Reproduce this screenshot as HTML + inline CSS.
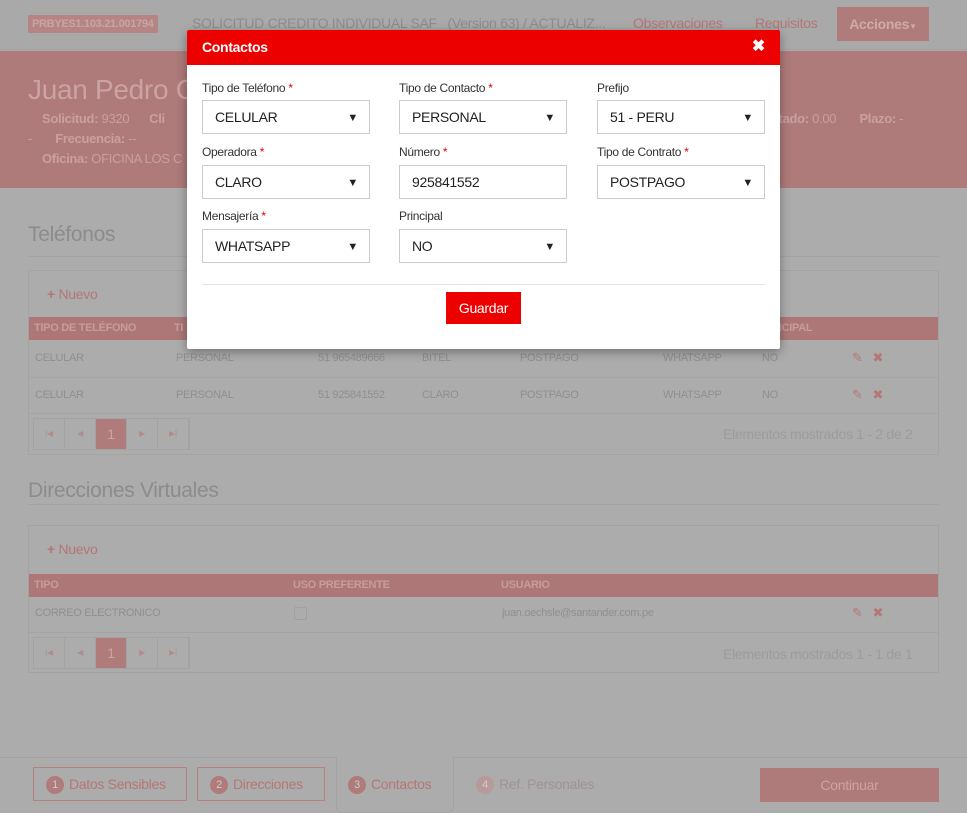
<!DOCTYPE html>
<html><head><meta charset="utf-8"><style>
*{box-sizing:border-box;margin:0;padding:0}
body{width:967px;height:812px;overflow:hidden;background:#acacac;font-family:"Liberation Sans",sans-serif;position:relative;color:#8a8a8a;letter-spacing:-0.3px}
.abs{position:absolute}
.top{left:0;top:0;width:967px;height:50px;background:#a9a9a9;border-bottom:1px solid #a0a0a0}
.badge{left:28px;top:15px;background:#b58585;color:#c9a4a4;font-size:11px;font-weight:bold;padding:3px 4px;border-radius:2px}
.hdr{left:0;top:51px;width:967px;height:137px;background:#ae7a7a}
.red{color:#b57676}
.sec{font-size:21px;color:#8c8c8c}
.box{left:28px;width:911px;border:1px solid #a3a3a3}
.th{background:#ad7777;color:#c79c9c;font-size:11px;font-weight:bold;height:23px;line-height:23px}
.cell{font-size:11px;color:#8f8f8f}
.pag{border:1px solid #a3a3a3;height:32px;display:flex}
.pag span{width:31px;border-right:1px solid #a3a3a3;text-align:center;line-height:30px;font-size:8px;color:#b28c8c}
.pag span.a{background:#b07b7b;color:#c8a5a5;font-size:14px}
.modal{left:187px;top:30px;width:593px;height:319px;background:#fff;box-shadow:0 3px 10px rgba(0,0,0,.35);border-radius:2px}
.mh{height:35px;background:#ec0000;color:#fff;font-weight:bold;font-size:14px;line-height:34px;padding-left:15px;border-radius:2px 2px 0 0}
.lbl{font-size:12px;color:#333}
.lbl b{color:#d00;font-weight:normal}
.sel{width:168px;height:34px;border:1px solid #ccc;font-size:14px;color:#222;line-height:32px;padding-left:12px}
.sel i{position:absolute;right:11px;top:1px;font-style:normal;font-size:11px}
.num{display:inline-block;width:18px;height:18px;border-radius:9px;background:#b07b7b;color:#ccc;font-size:11px;text-align:center;line-height:18px;margin-right:5px;vertical-align:middle}
.step{font-size:14px;line-height:18px}
</style></head><body>
<div class="abs top"></div>
<div class="abs badge">PRBYES1.103.21.001794</div>
<div class="abs" style="left:192px;top:15px;font-size:14px;color:#8d8d8d">SOLICITUD CREDITO INDIVIDUAL SAF &nbsp;&nbsp;(Version 63) / ACTUALIZ...</div>
<div class="abs red" style="left:633px;top:15px;font-size:14px">Observaciones</div>
<div class="abs red" style="left:755px;top:15px;font-size:14px">Requisitos</div>
<div class="abs" style="left:837px;top:7px;width:92px;height:34px;background:#b07b7b;color:#cfa9a9;font-weight:bold;font-size:14px;line-height:34px;text-align:center">Acciones<span style="font-size:8px">▼</span></div>
<div class="abs hdr"></div>
<div class="abs" style="left:28px;top:74px;font-size:28px;color:#cba3a3">Juan Pedro C</div>
<div class="abs" style="left:42px;top:111px;font-size:13px;color:#c9a0a0"><b>Solicitud:</b> 9320 &nbsp;&nbsp;&nbsp;&nbsp;&nbsp;<b>Cli</b></div>
<div class="abs" style="left:765px;top:111px;font-size:13px;color:#c9a0a0"><b>icitado:</b> 0.00 &nbsp;&nbsp;&nbsp;&nbsp;&nbsp;&nbsp;<b>Plazo:</b> -</div>
<div class="abs" style="left:28px;top:131px;font-size:13px;color:#c9a0a0">- &nbsp;&nbsp;&nbsp;&nbsp;&nbsp;&nbsp;<b>Frecuencia:</b> --</div>
<div class="abs" style="left:42px;top:151px;font-size:13px;color:#c9a0a0"><b>Oficina:</b> OFICINA LOS C</div>

<div class="abs sec" style="left:28px;top:223px">Teléfonos</div>
<div class="abs" style="left:28px;top:256px;width:911px;border-top:1px solid #a4a4a4"></div>
<div class="abs box" style="top:270px;height:185px"></div>
<div class="abs red" style="left:47px;top:286px;font-size:14px"><b>+</b> Nuevo</div>
<div class="abs th" style="left:29px;top:317px;width:909px">
 <span class="abs" style="left:5px">TIPO DE TELÉFONO</span><span class="abs" style="left:145px">TI</span><span class="abs" style="left:745px">NCIPAL</span></div>
<div class="abs cell" style="left:35px;top:352px">CELULAR</div><div class="abs cell" style="left:176px;top:352px">PERSONAL</div><div class="abs cell" style="left:318px;top:352px">51 965489666</div><div class="abs cell" style="left:422px;top:352px">BITEL</div><div class="abs cell" style="left:520px;top:352px">POSTPAGO</div><div class="abs cell" style="left:663px;top:352px">WHATSAPP</div><div class="abs cell" style="left:762px;top:352px">NO</div>
<div class="abs red" style="left:852px;top:350px;font-size:13px">✎ &nbsp;&nbsp;✖</div>
<div class="abs" style="left:29px;top:377px;width:909px;border-top:1px solid #a4a4a4"></div>
<div class="abs cell" style="left:35px;top:389px">CELULAR</div><div class="abs cell" style="left:176px;top:389px">PERSONAL</div><div class="abs cell" style="left:318px;top:389px">51 925841552</div><div class="abs cell" style="left:422px;top:389px">CLARO</div><div class="abs cell" style="left:520px;top:389px">POSTPAGO</div><div class="abs cell" style="left:663px;top:389px">WHATSAPP</div><div class="abs cell" style="left:762px;top:389px">NO</div>
<div class="abs red" style="left:852px;top:387px;font-size:13px">✎ &nbsp;&nbsp;✖</div>
<div class="abs" style="left:29px;top:413px;width:909px;border-top:1px solid #a4a4a4"></div>
<div class="abs pag" style="left:33px;top:418px"><span>|◀</span><span>◀</span><span class="a">1</span><span>▶</span><span>▶|</span></div>
<div class="abs" style="left:723px;top:426px;font-size:14px;color:#9c9c9c">Elementos mostrados 1 - 2 de 2</div>

<div class="abs sec" style="left:28px;top:479px">Direcciones Virtuales</div>
<div class="abs" style="left:28px;top:504px;width:911px;border-top:1px solid #a4a4a4"></div>
<div class="abs box" style="top:525px;height:148px"></div>
<div class="abs red" style="left:47px;top:541px;font-size:14px"><b>+</b> Nuevo</div>
<div class="abs th" style="left:29px;top:574px;width:909px"><span class="abs" style="left:5px">TIPO</span><span class="abs" style="left:264px">USO PREFERENTE</span><span class="abs" style="left:472px">USUARIO</span></div>
<div class="abs cell" style="left:35px;top:607px">CORREO ELECTRONICO</div>
<div class="abs" style="left:294px;top:607px;width:13px;height:13px;border:1px solid #a0a0a0;border-radius:2px"></div>
<div class="abs cell" style="left:502px;top:607px">juan.oechsle@santander.com.pe</div>
<div class="abs red" style="left:852px;top:605px;font-size:13px">✎ &nbsp;&nbsp;✖</div>
<div class="abs" style="left:29px;top:632px;width:909px;border-top:1px solid #a4a4a4"></div>
<div class="abs pag" style="left:33px;top:637px"><span>|◀</span><span>◀</span><span class="a">1</span><span>▶</span><span>▶|</span></div>
<div class="abs" style="left:723px;top:646px;font-size:14px;color:#9c9c9c">Elementos mostrados 1 - 1 de 1</div>

<div class="abs" style="left:0;top:757px;width:967px;border-top:1px solid #a3a3a3"></div>
<div class="abs" style="left:336px;top:757px;width:118px;height:56px;border:1px solid #a3a3a3;border-top:none;border-radius:0 0 6px 6px;background:#acacac"></div>
<div class="abs" style="left:33px;top:767px;width:154px;height:34px;border:1px solid #b58080"></div>
<div class="abs" style="left:197px;top:767px;width:128px;height:34px;border:1px solid #b58080"></div>
<div class="abs red step" style="left:46px;top:775px"><span class="num">1</span>Datos Sensibles</div>
<div class="abs red step" style="left:210px;top:775px"><span class="num">2</span>Direcciones</div>
<div class="abs red step" style="left:348px;top:775px"><span class="num">3</span>Contactos</div>
<div class="abs step" style="left:476px;top:775px;color:#a09292"><span class="num" style="background:#b89a9a">4</span>Ref. Personales</div>
<div class="abs" style="left:760px;top:768px;width:179px;height:34px;background:#ae7a7a;color:#cca5a5;font-size:14px;text-align:center;line-height:34px">Continuar</div>

<div class="abs modal">
 <div class="mh">Contactos<span class="abs" style="right:15px;top:0;font-size:16px">✖</span></div>
 <div class="abs lbl" style="left:15px;top:51px">Tipo de Teléfono <b>*</b></div>
 <div class="abs lbl" style="left:212px;top:51px">Tipo de Contacto <b>*</b></div>
 <div class="abs lbl" style="left:410px;top:51px">Prefijo</div>
 <div class="abs sel" style="left:15px;top:70px">CELULAR<i>▼</i></div>
 <div class="abs sel" style="left:212px;top:70px">PERSONAL<i>▼</i></div>
 <div class="abs sel" style="left:410px;top:70px">51 - PERU<i>▼</i></div>
 <div class="abs lbl" style="left:15px;top:115px">Operadora <b>*</b></div>
 <div class="abs lbl" style="left:212px;top:115px">Número <b>*</b></div>
 <div class="abs lbl" style="left:410px;top:115px">Tipo de Contrato <b>*</b></div>
 <div class="abs sel" style="left:15px;top:135px">CLARO<i>▼</i></div>
 <div class="abs sel" style="left:212px;top:135px">925841552</div>
 <div class="abs sel" style="left:410px;top:135px">POSTPAGO<i>▼</i></div>
 <div class="abs lbl" style="left:15px;top:179px">Mensajería <b>*</b></div>
 <div class="abs lbl" style="left:212px;top:179px">Principal</div>
 <div class="abs sel" style="left:15px;top:199px">WHATSAPP<i>▼</i></div>
 <div class="abs sel" style="left:212px;top:199px">NO<i>▼</i></div>
 <div class="abs" style="left:15px;top:254px;width:563px;border-top:1px solid #e5e5e5"></div>
 <div class="abs" style="left:259px;top:262px;width:75px;height:32px;background:#ec0000;color:#fff;font-size:14px;text-align:center;line-height:32px">Guardar</div>
</div>
</body></html>
